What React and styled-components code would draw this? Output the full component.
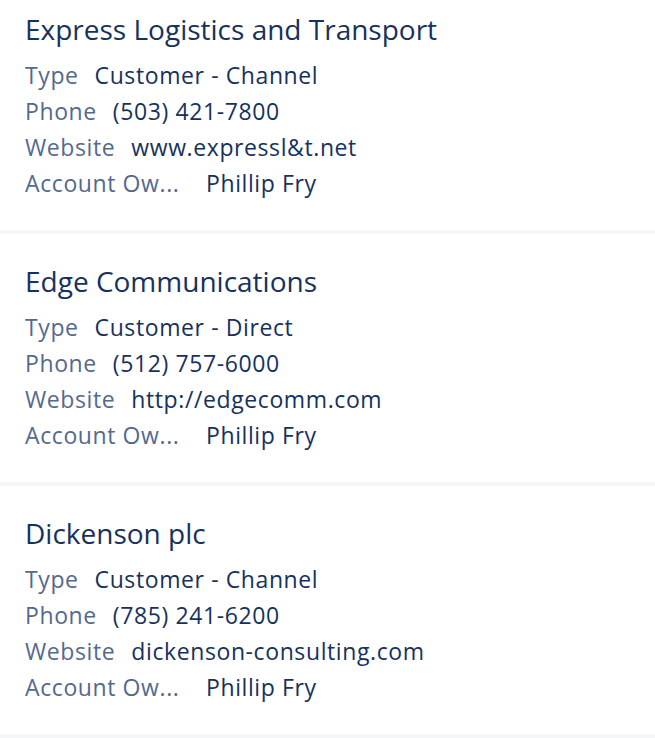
import React from 'react';
import styled, { createGlobalStyle } from 'styled-components';

const accounts = [
  {
    name: 'Express Logistics and Transport',
    type: 'Customer - Channel',
    phone: '(503) 421-7800',
    website: 'www.expressl&t.net',
    owner: 'Phillip Fry',
  },
  {
    name: 'Edge Communications',
    type: 'Customer - Direct',
    phone: '(512) 757-6000',
    website: 'http://edgecomm.com',
    owner: 'Phillip Fry',
  },
  {
    name: 'Dickenson plc',
    type: 'Customer - Channel',
    phone: '(785) 241-6200',
    website: 'dickenson-consulting.com',
    owner: 'Phillip Fry',
  },
];

const GlobalStyle = createGlobalStyle`
  html, body {
    margin: 0;
    padding: 0;
    background: #ffffff;
    overflow: hidden;
  }
  body {
    font-family: "Open Sans", "Noto Sans", Arial, sans-serif;
    -webkit-font-smoothing: antialiased;
  }
`;

const App = () => {
  return (
    <>
      <GlobalStyle />
      <List>
        {accounts.map((acc) => (
          <Tile key={acc.name}>
            <Title>{acc.name}</Title>
            <Fields>
              <Row>
                <Label>Type</Label>
                <Value>{acc.type}</Value>
              </Row>
              <Row>
                <Label>Phone</Label>
                <Value>{acc.phone}</Value>
              </Row>
              <Row>
                <Label>Website</Label>
                <Value>{acc.website}</Value>
              </Row>
              <Row>
                <Label width={165}>Account Ow...</Label>
                <Value>{acc.owner}</Value>
              </Row>
            </Fields>
          </Tile>
        ))}
      </List>
    </>
  );
};

// the first tile is scrolled a little past the top of the view
const List = styled.div`
  display: flex;
  flex-direction: column;
  margin-top: -18px;
`;

const Tile = styled.div`
  display: flex;
  flex-direction: column;
  box-sizing: border-box;
  height: 252px;
  padding: 31px 24px 0 25px;
  border-bottom: 4px solid #f4f6f9;
`;

const Title = styled.h3`
  margin: 0 0 12px;
  font-size: 28px;
  line-height: 32px;
  font-weight: 400;
  color: #16325c;
  white-space: nowrap;
`;

const Fields = styled.dl`
  margin: 0;
  display: flex;
  flex-direction: column;
`;

const Row = styled.div`
  display: flex;
  align-items: baseline;
  gap: 16px;
  font-size: 23px;
  line-height: 36px;
  letter-spacing: 0.6px;
`;

const Label = styled.dt`
  margin: 0;
  color: #54698d;
  white-space: nowrap;
  overflow: hidden;
  text-overflow: ellipsis;
  flex: none;
  width: ${(p) => (p.width ? `${p.width}px` : 'auto')};
`;

const Value = styled.dd`
  margin: 0;
  color: #16325c;
  white-space: nowrap;
`;

export default App;
